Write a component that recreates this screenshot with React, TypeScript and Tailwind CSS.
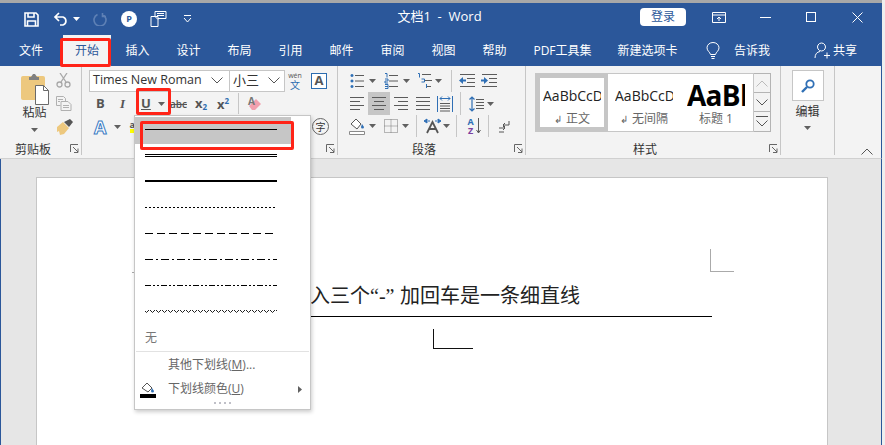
import React from "react";

const Caret = ({ className = "", fill = "#606060" }: { className?: string; fill?: string }) => (
  <svg width="7" height="4" viewBox="0 0 7 4" className={`shrink-0 ${className}`}><path d="M0 0h7L3.5 4z" fill={fill} /></svg>
);
const Sep = ({ className = "" }: { className?: string }) => <div className={`w-px self-stretch shrink-0 bg-[#c6c6c6] ${className}`} />;
const Launcher = () => (
  <svg width="9" height="9" viewBox="0 0 9 9" className="shrink-0"><path d="M.5 8V.5H8M3 3l5 5M8 4.500V8.500H4" fill="none" stroke="#666" /></svg>
);
const Chevron = ({ className = "", size = 12, up = false, color = "#555" }: { className?: string; size?: number; up?: boolean; color?: string }) => (
  <svg width={size} height={size / 2 + 1} viewBox="0 0 12 7" className={`shrink-0 ${className}`}><path d={up ? "M.5 6.500 6 1l5.500 5.500" : "M.5.500 6 6 11.500.500"} fill="none" stroke={color} /></svg>
);

const Lines = ({ kind, className = "" }: { kind: "left" | "center" | "right" | "just"; className?: string }) => {
  const rows: Record<string, string> = {
    left: "M0 1.500h14M0 5.500h10M0 9.500h14M0 13.500h10",
    center: "M0 1.500h14M2 5.500h10M0 9.500h14M2 13.500h10",
    right: "M0 1.500h14M4 5.500h10M0 9.500h14M4 13.500h10",
    just: "M0 1.500h14M0 5.500h14M0 9.500h14M0 13.500h14",
  };
  return <svg width="14" height="15" viewBox="0 0 14 15" className={`shrink-0 ${className}`}><path d={rows[kind]} stroke="#5b5b5b" /></svg>;
};

const Style = ({ sample, name, arrow = true, active = false, big = false }: { sample: string; name: string; arrow?: boolean; active?: boolean; big?: boolean }) => (
  <div className={`w-[72px] h-[57px] shrink-0 overflow-hidden flex flex-col items-center bg-white border-4 ${active ? "border-[#c6c6c6]" : "border-white"}`}>
    <div className={`h-[33px] flex items-center overflow-hidden w-[58px] whitespace-nowrap ${big ? "font-bold text-[28px] tracking-tight text-black" : "text-[14px] pt-[1px] text-[#222]"}`}>{sample}</div>
    <div className="text-[12px] leading-4 text-[#666] whitespace-nowrap">{arrow && <span className="text-[10px] mr-1">↲</span>}{name}</div>
  </div>
);

const tabs = ["插入", "设计", "布局", "引用", "邮件", "审阅", "视图", "帮助"];

export default function App() {
  return (
    <div className="relative w-[885px] h-[445px] overflow-hidden bg-[#eeeeee] font-['Open_Sans','Noto_Sans_CJK_SC',sans-serif] text-[12px] text-[#333]">
      <div className="w-[882px] h-full flex flex-col">
        {/* title bar */}
        <div className="h-[3px] bg-[#a8a8a8] shrink-0" />
        <div className="h-[32px] shrink-0 bg-[#2b579a] flex items-center text-white">
          <svg width="15" height="15" viewBox="0 0 15 15" className="ml-[24px]"><path d="M1 1h11l2 2v11H1z M4 1v4h6V1 M3.500 14V9h8v5" fill="none" stroke="#fff" strokeWidth="1.600" /></svg>
          <svg width="16" height="14" viewBox="0 0 16 14" className="ml-[14px]"><path d="M6 1 2 5l4 4M2 5h8a4.200 4.200 0 0 1 0 8H7" fill="none" stroke="#fff" strokeWidth="1.700" /></svg>
          <Caret fill="#fff" className="ml-[4px]" />
          <svg width="14" height="14" viewBox="0 0 14 14" className="ml-[13px]"><path d="M9.500 2.500a6 6 0 1 1-5 0M9.500 1v3.500H13" fill="none" stroke="#5e80b5" strokeWidth="1.600" /></svg>
          <div className="ml-[14px] w-4 h-4 rounded-full bg-white text-[#2b579a] text-[9px] font-bold flex items-center justify-center">P</div>
          <svg width="17" height="18" viewBox="0 0 17 18" className="ml-[13px]"><path d="M1 6.500h7v10H1zM5 6.500V1.500h11v7H8M7 3.500h7M7 5.500h7M5 6.500l3 3" fill="none" stroke="#fff" /></svg>
          <svg width="9" height="8" viewBox="0 0 9 8" className="ml-[16px]"><path d="M1 .5h7M1 3l3.500 4L8 3" fill="none" stroke="#fff" /></svg>
          <div className="flex items-center mb-[4px]">
            <div className="ml-[205px] text-[13px] whitespace-nowrap w-[85px] text-center">文档1&nbsp; -&nbsp; Word</div>
            <div className="ml-[158px] w-[46px] h-[18px] bg-white text-[#2b579a] rounded-sm text-[12px] flex items-center justify-center">登录</div>
            <svg width="14" height="11" viewBox="0 0 14 11" className="ml-[26px]"><path d="M.5.500h13v10H.5zM.5 3h13M7 9V5M5 7l2-2 2 2" fill="none" stroke="#fff" /></svg>
            <div className="ml-[34px] w-[11px] h-px bg-white" />
            <div className="ml-[35px] w-[10px] h-[10px] border border-white" />
            <svg width="11" height="11" viewBox="0 0 11 11" className="ml-[36px]"><path d="m.5.500 10 10M10.500.500l-10 10" stroke="#fff" /></svg>
          </div>
        </div>
        {/* tabs */}
        <div className="h-[31px] shrink-0 bg-[#2b579a] flex items-stretch text-white whitespace-nowrap">
          <div className="w-[63px] flex items-center pl-[19px]">文件</div>
          <div className="w-[48px] mr-[1px] bg-[#f3f3f3] text-[#2b579a] flex items-center justify-center">开始</div>
          {tabs.map((t) => <div key={t} className="w-[51px] flex items-center justify-center">{t}</div>)}
          <div className="w-[85px] flex items-center justify-center">PDF工具集</div>
          <div className="w-[85px] flex items-center justify-center">新建选项卡</div>
          <div className="ml-[16px] flex items-center">
            <svg width="14" height="18" viewBox="0 0 14 18"><path d="M4.500 12.500C4 10 1 9 1 5.800a6 5.300 0 0 1 12 0C13 9 10 10 9.500 12.500zM5 14.500h4M5.500 16.500h3" fill="none" stroke="#fff" /></svg>
          </div>
          <div className="ml-[14px] flex items-center">告诉我</div>
          <div className="ml-[44px] flex items-center">
            <svg width="16" height="17" viewBox="0 0 16 17"><path d="M7.500 1a4 4 0 1 1-.01 0M1 16c0-4 2-6 5-6.500M10 13.500h6M13 10.500v6" fill="none" stroke="#fff" /></svg>
          </div>
          <div className="ml-[3px] flex items-center">共享</div>
        </div>

        {/* ribbon */}
        <div className="h-[93px] shrink-0 bg-[#f3f3f3] border-b border-[#d0d0d0] border-r border-r-[#2b579a] flex">
          {/* clipboard */}
          <div className="w-[82px] shrink-0 border-r border-[#c6c6c6] mb-[3px] flex flex-col">
            <div className="h-[76px] flex">
              <div className="w-[55px] flex flex-col items-center pt-[7px] pl-[14px]">
                <svg width="28" height="32" viewBox="0 0 28 32" className="shrink-0">
                  <path d="M0 5q0-2 2-2h20q2 0 2 2v22H2q-2 0-2-2z" fill="#edc87e" />
                  <path d="M8 4h2l2-3h2l2 3h2v3H8z" fill="#808080" />
                  <path d="M14.500 12.500h8l5 5v14h-13z" fill="#fff" stroke="#6a6a6a" />
                  <path d="M22.500 12.500v5h5" fill="none" stroke="#6a6a6a" />
                </svg>
                <div className="text-[12px] leading-[18px] mt-[-1px] text-[#333] whitespace-nowrap">粘贴</div>
                <Caret className="mt-[6px]" />
              </div>
              <div className="flex flex-col pt-[7px] pl-[1px]">
                <svg width="15" height="15" viewBox="0 0 15 15"><path d="M4 0 10 9M11 0 5 9" stroke="#a8a8a8" strokeWidth="1.300" /><circle cx="3.500" cy="11.500" r="2.500" fill="none" stroke="#a8a8a8" strokeWidth="1.300" /><circle cx="11.500" cy="11.500" r="2.500" fill="none" stroke="#a8a8a8" strokeWidth="1.300" /></svg>
                <svg width="16" height="15" viewBox="0 0 16 15" className="mt-[8px]"><path d="M.5.500h7l2 2v3M.5.500v9h4M5 5.500h7l3 3v6H5zM2 3.500h5M2 5.500h2M7 9.500h6M7 11.500h6" fill="none" stroke="#b0b0b0" /></svg>
                <svg width="18" height="18" viewBox="0 0 18 18" className="mt-[7px]"><path d="M1 9l6-5 6 6-5 6-4 1-1-4-2 1z" fill="#edc87e" /><path d="M8 4l5 5 4-5-3-3z" fill="#555" /></svg>
              </div>
            </div>
            <div className="h-[13px] shrink-0 pt-[2px] flex items-start">
              <div className="ml-[15px] w-[55px] leading-none">剪贴板</div>
              <Launcher />
            </div>
          </div>

          {/* font */}
          <div className="w-[256px] shrink-0 border-r border-[#c6c6c6] mb-[3px] flex flex-col">
            <div className="h-[76px] flex flex-col pt-[3px] pl-[7px]">
              <div className="h-[23px] flex items-center">
                <div className="w-[141px] h-[22px] bg-white border border-[#c6c6c6] flex items-center pl-[3px] pr-[6px] justify-between shrink-0">
                  <span className="text-[12.500px] text-[#333] whitespace-nowrap">Times New Roman</span>
                  <Chevron />
                </div>
                <div className="w-[55px] h-[22px] bg-white border border-[#c6c6c6] border-l-0 flex items-center pl-[3px] pr-[4px] justify-between shrink-0">
                  <span className="text-[13px]">小三</span>
                  <Chevron />
                </div>
                <div className="ml-[3px] w-[14px] flex flex-col items-center leading-none">
                  <span className="text-[#555] text-[7px] leading-[8px]">wén</span>
                  <span className="text-[#2b6cb0] text-[10px] leading-[10px]">文</span>
                </div>
                <div className="ml-[9px] w-[16px] h-[16px] border border-[#2b6cb0] bg-white flex items-center justify-center font-bold text-[13px] leading-none text-[#555]">A</div>
              </div>
              <div className="h-[23px] flex items-center text-[#555]">
                <span className="ml-[7px] w-[22px] font-bold text-[13px] leading-none">B</span>
                <span className="w-[20px] pl-[2px] italic font-bold text-[13px] leading-none font-['Liberation_Serif',serif]">I</span>
                <span className="w-[20px] pl-[3px] underline font-bold text-[13px] leading-none">U</span>
                <Caret className="mr-[5px]" />
                <span className="w-[25px] line-through text-[10px] font-semibold leading-none">abc</span>
                <span className="w-[22px] font-bold text-[13px] leading-none">x<span className="text-[8px] text-[#2b6cb0] align-[-2px]">2</span></span>
                <span className="w-[21px] font-bold text-[13px] leading-none">x<span className="text-[8px] text-[#2b6cb0] align-[5px]">2</span></span>
                <Sep className="my-[1px]" />
                <svg width="16" height="16" viewBox="0 0 16 16" className="ml-[8px]"><path d="M2 10l7-7 5 5-6 6H5z" fill="#f2a0ae" /><text x="1" y="9" fontSize="10" fontWeight="700" fill="#777">A</text></svg>
              </div>
              <div className="h-[23px] flex items-center">
                <span className="ml-[5px] w-[18px] text-[18px] leading-none font-bold text-white [-webkit-text-stroke:1px_#3b7cc4]">A</span>
                <Caret className="ml-[2px]" />
                <div className="ml-[7px] w-[14px] flex flex-col items-center leading-none">
                  <span className="text-[9px] font-bold text-[#555]">ab</span>
                  <div className="w-[10px] h-[4px] bg-[#ffff00]" />
                </div>
                <div className="ml-[170px] w-[17px] h-[17px] rounded-full border border-[#666] text-[10px] flex items-center justify-center leading-none">字</div>
              </div>
            </div>
            <div className="h-[13px] shrink-0 pt-[2px] flex justify-end pr-[2px]"><Launcher /></div>
          </div>

          {/* paragraph */}
          <div className="w-[188px] shrink-0 border-r border-[#c6c6c6] mb-[3px] flex flex-col">
            <div className="h-[76px] flex flex-col pt-[4px]">
              <div className="h-[22px] flex items-center pl-[12px]">
                <svg width="14" height="16" viewBox="0 0 14 16"><path d="M5 2.500h9M5 8h9M5 13.500h9" stroke="#5b5b5b" /><path d="M2 1a1.500 1.500 0 1 1-.01 0M2 6.500a1.500 1.500 0 1 1-.01 0M2 12a1.500 1.500 0 1 1-.01 0" fill="#2f6fb5" /></svg>
                <Caret className="ml-[5px]" />
                <svg width="14" height="16" viewBox="0 0 14 16" className="ml-[8px]"><path d="M5 2.500h9M5 8h9M5 13.500h9" stroke="#5b5b5b" /><path d="M1 .5h2v4M1 6h3v2H1v2h3M1 11.500h3v4H1M1 13.500h3" fill="none" stroke="#2f6fb5" /></svg>
                <Caret className="ml-[5px]" />
                <svg width="16" height="16" viewBox="0 0 16 16" className="ml-[7px]"><path d="M5 1.500h9M8 7.500h7M10 13.500h4" stroke="#5b5b5b" /><path d="M1 .5h1.500v4M4.500 6h3v3h-3M9.500 11v4" fill="none" stroke="#2f6fb5" /></svg>
                <Caret className="ml-[2px]" />
                <Sep className="ml-[9px]" />
                <svg width="16" height="14" viewBox="0 0 16 14" className="ml-[7px]"><path d="M1 .5h15M8 4.500h8M8 8.500h8M1 12.500h15" stroke="#5b5b5b" /><path d="M0 6.500 4 3v2.500h3v2H4V10z" fill="#2f6fb5" /></svg>
                <svg width="16" height="14" viewBox="0 0 16 14" className="ml-[6px]"><path d="M1 .5h15M8 4.500h8M8 8.500h8M1 12.500h15" stroke="#5b5b5b" /><path d="M7 6.500 3 3v2.500H0v2h3V10z" fill="#2f6fb5" /></svg>
              </div>
              <div className="h-[23px] flex items-center pl-[12px]">
                <Lines kind="left" />
                <div className="ml-[4px] w-[22px] h-[23px] bg-[#c6c6c6] flex items-center justify-center shrink-0"><Lines kind="center" /></div>
                <Lines kind="right" className="ml-[4px]" />
                <Lines kind="just" className="ml-[8px]" />
                <svg width="16" height="16" viewBox="0 0 16 16" className="ml-[7px]"><path d="M.5 0v16M15.500 0v16" stroke="#2f6fb5" /><path d="M3 2.500h10M3 2.500l2-2M3 2.500l2 2M13 2.500l-2-2M13 2.500l-2 2" stroke="#2f6fb5" /><path d="M3 7.500h10M3 10h10M3 12.500h10M3 15h10" stroke="#5b5b5b" /></svg>
                <Sep className="ml-[7px]" />
                <svg width="15" height="16" viewBox="0 0 15 16" className="ml-[8px]"><path d="M3 1v14M.5 3.500 3 1l2.500 2.500M.5 12.500 3 15l2.500-2.500" fill="none" stroke="#2f6fb5" strokeWidth="1.200" /><path d="M7 3.500h8M7 6.500h8M7 9.500h8M7 12.500h8" stroke="#5b5b5b" /></svg>
                <Caret className="ml-[3px]" />
              </div>
              <div className="h-[22px] flex items-center pl-[11px]">
                <svg width="16" height="18" viewBox="0 0 16 18"><path d="M2 7l5-5 5 5-4 5z" fill="#fff" stroke="#555" /><path d="M13 7l2 3a1.500 1.500 0 0 1-3 0z" fill="#2f6fb5" /><path d="M.5 14.500h15v3H.5z" fill="#fff" stroke="#8a8a8a" /></svg>
                <Caret className="ml-[4px]" />
                <svg width="14" height="14" viewBox="0 0 14 14" className="ml-[8px]"><path d="M.5.500h13v13H.5zM7 .5v13M.5 7h13" fill="none" stroke="#777" strokeDasharray="1 1" /></svg>
                <Caret className="ml-[4px]" />
                <Sep className="ml-[7px]" />
                <svg width="17" height="16" viewBox="0 0 17 16" className="ml-[7px]"><path d="M3 15 8.500 4 14 15M5 11h7" fill="none" stroke="#555" strokeWidth="1.800" /><path d="M0 3l3-2v4zM17 3l-3-2v4zM4 3h2M11 3h2" fill="#2f6fb5" stroke="#2f6fb5" /></svg>
                <Caret className="ml-[2px]" />
                <Sep className="ml-[6px]" />
                <div className="ml-[9px] w-[9px] flex flex-col items-center text-[9px] leading-[9px] font-bold">
                  <span className="text-[#2f6fb5]">A</span>
                  <span className="text-[#7a3fa0]">Z</span>
                </div>
                <svg width="5" height="16" viewBox="0 0 5 16" className="ml-[1px]"><path d="M2.500 0v15M.5 12l2 3 2-3" fill="none" stroke="#5b5b5b" /></svg>
                <Sep className="ml-[7px]" />
                <svg width="11" height="13" viewBox="0 0 11 13" className="ml-[10px]"><path d="M10 1v4H4M6 3 4 5l2 2M0 8h6M4 6l2 2-2 2M0 12h5" fill="none" stroke="#555" /></svg>
              </div>
            </div>
            <div className="h-[13px] shrink-0 pt-[2px] flex items-start pl-[74px] pr-[2px] justify-between">
              <span className="leading-none">段落</span>
              <Launcher />
            </div>
          </div>

          {/* styles */}
          <div className="w-[255px] shrink-0 border-r border-[#c6c6c6] mb-[3px] flex flex-col">
            <div className="h-[76px] pl-[9px] pt-[7px] flex">
              <div className="w-[219px] h-[59px] border border-[#c6c6c6] bg-white flex overflow-hidden shrink-0">
                <Style sample="AaBbCcDc" name="正文" active />
                <Style sample="AaBbCcDc" name="无间隔" />
                <Style sample="AaBb" name="标题 1" arrow={false} big />
              </div>
              <div className="w-[17px] h-[59px] flex flex-col shrink-0 border border-l-0 border-[#b4b4b4] bg-[#f3f3f3]">
                <div className="h-[19px] border-b border-[#b4b4b4] flex items-center justify-center"><Chevron up color="#bbb" /></div>
                <div className="h-[19px] border-b border-[#b4b4b4] flex items-center justify-center"><Chevron /></div>
                <div className="flex-1 flex flex-col items-center justify-center gap-[3px]"><div className="w-3 h-px bg-[#555]" /><Chevron /></div>
              </div>
            </div>
            <div className="h-[13px] shrink-0 pt-[2px] flex items-start pl-[107px] pr-[2px] justify-between">
              <span className="leading-none">样式</span>
              <Launcher />
            </div>
          </div>

          {/* edit */}
          <div className="w-[54px] shrink-0 border-r border-[#c6c6c6] mb-[3px] flex flex-col items-center pt-[4px]">
            <div className="w-[32px] h-[31px] border border-[#c6c6c6] bg-white flex items-center justify-center">
              <svg width="14" height="14" viewBox="0 0 14 14"><circle cx="9" cy="5" r="3.700" fill="none" stroke="#2f6fb5" strokeWidth="1.800" /><path d="M6 8 1 13" stroke="#2f6fb5" strokeWidth="2.400" /></svg>
            </div>
            <div className="text-[12px] mt-[2px] leading-[18px]">编辑</div>
            <Caret className="mt-[5px]" />
          </div>

          <div className="flex-1 flex items-end justify-end pr-[8px] pb-[3px]">
            <Chevron up size={12} />
          </div>
        </div>

        {/* document */}
        <div className="flex-1 pt-[18px] pl-[35px] overflow-hidden bg-[#e6e6e6] border-l border-l-[#2b579a] border-r border-r-[#2b579a]">
          <div className="w-[792px] h-[300px] bg-white border border-[#c6c6c6] relative">
            <div className="pl-[273px] pt-[106px] h-[138px] text-[20px] leading-[24px] text-[#222] whitespace-nowrap">入三个<span className="inline-block w-[30px] font-['Liberation_Serif',serif]">“-”</span>加回车是一条细直线</div>
            <div className="ml-[97px] w-[578px] h-px bg-black" />
            <div className="ml-[396px] mt-[12px] w-[40px] h-[20px] border-l border-b border-[#111]" />
            <div className="absolute left-[673px] top-[71px] w-[24px] h-[23px] border-l border-b border-[#aaa]" />
            <div className="absolute left-[95px] top-[94px] w-[3px] h-px bg-[#aaa]" />
          </div>
        </div>
      </div>

      {/* underline menu */}
      <div className="absolute left-[134px] top-[115px] w-[177px] h-[295px] bg-white border border-[#c6c6c6] shadow-[1px_2px_4px_rgba(0,0,0,0.2)] flex flex-col">
        <div className="h-[27px] mt-[1px] w-[156px] bg-[#c6c6c6] flex items-center pl-[10px] pb-[2px]"><div className="w-[132px] h-px bg-black" /></div>
        <div className="h-[25px] pl-[10px] pt-[10px]"><div className="w-[132px] h-[3px] border-y border-black" /></div>
        <div className="h-[26px] pl-[10px] pt-[11px]"><div className="w-[132px] h-[2px] bg-black" /></div>
        <div className="h-[26px] pl-[10px] pt-[12px]"><svg width="130" height="1" className="block"><path d="M0 .5h130" stroke="#000" strokeDasharray="2 2" /></svg></div>
        <div className="h-[26px] pl-[10px] pt-[12px]"><svg width="128" height="1" className="block"><path d="M0 .5h128" stroke="#000" strokeDasharray="8 4" /></svg></div>
        <div className="h-[26px] pl-[10px] pt-[12px]"><svg width="132" height="1" className="block"><path d="M0 .5h132" stroke="#000" strokeDasharray="8 3 2 3" /></svg></div>
        <div className="h-[26px] pl-[10px] pt-[12px]"><svg width="132" height="1" className="block"><path d="M0 .5h132" stroke="#000" strokeDasharray="6 2 2 2 2 2" /></svg></div>
        <div className="h-[26px] pl-[10px] pt-[11px]"><svg width="132" height="4" className="block"><path d="M0 1q1.500 3 3 0t3 0 3 0 3 0 3 0 3 0 3 0 3 0 3 0 3 0 3 0 3 0 3 0 3 0 3 0 3 0 3 0 3 0 3 0 3 0 3 0 3 0 3 0 3 0 3 0 3 0 3 0 3 0 3 0 3 0 3 0 3 0 3 0 3 0 3 0 3 0 3 0 3 0 3 0 3 0 3 0 3 0 3 0 3 0" fill="none" stroke="#222" /></svg></div>
        <div className="h-[26px] pl-[10px] flex items-center text-[#777]">无</div>
        <div className="h-px bg-[#e2e2e2] mx-[1px]" />
        <div className="h-[24px] mt-[1px] pl-[33px] flex items-center text-[#666] whitespace-nowrap">其他下划线(<span className="underline">M</span>)...</div>
        <div className="h-[24px] pl-[5px] flex items-center text-[#666] whitespace-nowrap">
          <svg width="16" height="17" viewBox="0 0 16 17" className="shrink-0"><path d="M2 7l5-5 5 5-4 4z" fill="#fff" stroke="#555" /><path d="M12 7l2 3a1.500 1.500 0 0 1-3 0z" fill="#2f6fb5" /><path d="M0 13h16v4H0z" fill="#000" /></svg>
          <span className="ml-[12px] w-[130px]">下划线颜色(<span className="underline">U</span>)</span>
          <svg width="4" height="7" viewBox="0 0 4 7"><path d="M0 0l4 3.500L0 7z" fill="#606060" /></svg>
        </div>
        <div className="flex justify-center gap-[3px] mt-[1px]">
          {[0, 1, 2, 3].map((i) => <div key={i} className="w-[2px] h-[2px] bg-[#c0c0c8]" />)}
        </div>
      </div>

      {/* red annotations */}
      <div className="absolute left-[60px] top-[38px] w-[51px] h-[29px] border-[3px] border-[#ff2418] rounded-[2px]" />
      <div className="absolute left-[136px] top-[88px] w-[35px] h-[27px] border-[3px] border-[#ff2418] rounded-[2px]" />
      <div className="absolute left-[140px] top-[121px] w-[154px] h-[29px] border-[3px] border-[#ff2418] rounded-[2px]" />
    </div>
  );
}
